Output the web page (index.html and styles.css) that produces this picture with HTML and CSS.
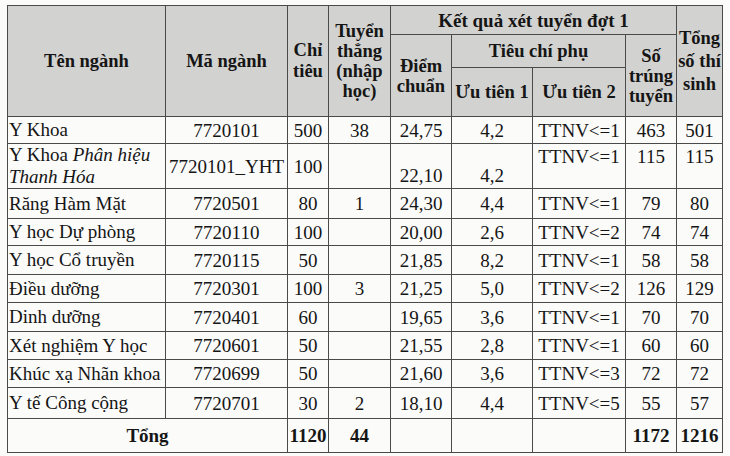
FILE: index.html
```html
<!DOCTYPE html>
<html lang="vi">
<head>
<meta charset="utf-8">
<title>Kết quả xét tuyển đợt 1</title>
<link rel="stylesheet" href="styles.css">
</head>
<body>
<table class="results">
  <colgroup>
    <col class="c-name"><col class="c-code"><col class="c-quota"><col class="c-direct">
    <col class="c-score"><col class="c-p1"><col class="c-p2"><col class="c-admit"><col class="c-total">
  </colgroup>
  <thead>
    <tr class="h1">
      <th rowspan="3">Tên ngành</th>
      <th rowspan="3">Mã ngành</th>
      <th rowspan="3">Chỉ<br>tiêu</th>
      <th rowspan="3" class="tight">Tuyển<br>thẳng<br>(nhập<br>học)</th>
      <th colspan="4" class="big">Kết quả xét tuyển đợt 1</th>
      <th rowspan="3" class="loose">Tổng<br>số thí<br>sinh</th>
    </tr>
    <tr class="h2">
      <th rowspan="2" class="tight">Điểm<br>chuẩn</th>
      <th colspan="2">Tiêu chí phụ</th>
      <th rowspan="2" class="tight">Số<br>trúng<br>tuyển</th>
    </tr>
    <tr class="h3">
      <th>Ưu tiên 1</th>
      <th>Ưu tiên 2</th>
    </tr>
  </thead>
  <tbody>
    <tr class="r27"><td class="name">Y Khoa</td><td>7720101</td><td>500</td><td>38</td><td>24,75</td><td>4,2</td><td>TTNV&lt;=1</td><td>463</td><td>501</td></tr>
    <tr class="r45"><td class="name">Y Khoa <i>Phân hiệu<br>Thanh Hóa</i></td><td>7720101_YHT</td><td>100</td><td></td><td class="bot">22,10</td><td class="bot">4,2</td><td class="top">TTNV&lt;=1</td><td class="top">115</td><td class="top">115</td></tr>
    <tr class="r30"><td class="name">Răng Hàm Mặt</td><td>7720501</td><td>80</td><td>1</td><td>24,30</td><td>4,4</td><td>TTNV&lt;=1</td><td>79</td><td>80</td></tr>
    <tr class="r27"><td class="name">Y học Dự phòng</td><td>7720110</td><td>100</td><td></td><td>20,00</td><td>2,6</td><td>TTNV&lt;=2</td><td>74</td><td>74</td></tr>
    <tr class="r29"><td class="name">Y học Cổ truyền</td><td>7720115</td><td>50</td><td></td><td>21,85</td><td>8,2</td><td>TTNV&lt;=1</td><td>58</td><td>58</td></tr>
    <tr class="r28"><td class="name">Điều dưỡng</td><td>7720301</td><td>100</td><td>3</td><td>21,25</td><td>5,0</td><td>TTNV&lt;=2</td><td>126</td><td>129</td></tr>
    <tr class="r29"><td class="name">Dinh dưỡng</td><td>7720401</td><td>60</td><td></td><td>19,65</td><td>3,6</td><td>TTNV&lt;=1</td><td>70</td><td>70</td></tr>
    <tr class="r28"><td class="name">Xét nghiệm Y học</td><td>7720601</td><td>50</td><td></td><td>21,55</td><td>2,8</td><td>TTNV&lt;=1</td><td>60</td><td>60</td></tr>
    <tr class="r28"><td class="name">Khúc xạ Nhãn khoa</td><td>7720699</td><td>50</td><td></td><td>21,60</td><td>3,6</td><td>TTNV&lt;=3</td><td>72</td><td>72</td></tr>
    <tr class="r31"><td class="name">Y tế Công cộng</td><td>7720701</td><td>30</td><td>2</td><td>18,10</td><td>4,4</td><td>TTNV&lt;=5</td><td>55</td><td>57</td></tr>
    <tr class="r34 sum"><td colspan="2">Tổng</td><td>1120</td><td>44</td><td></td><td></td><td></td><td>1172</td><td>1216</td></tr>
  </tbody>
</table>
</body>
</html>
```

FILE: styles.css
```css
html, body {
  margin: 0;
  padding: 0;
  background: #fbfbfa;
}
body {
  font-family: "Liberation Serif", "Tinos", "Times New Roman", "DejaVu Serif", serif;
  color: #151515;
  font-size: 19px;
}
.results {
  margin: 5px 0 0 7px;
  border-collapse: collapse;
  table-layout: fixed;
  width: 716px;
  font-family: "Liberation Serif", "Tinos", "Times New Roman", "DejaVu Serif", serif;
}
.results th,
.results td {
  border: 1px solid #4a4a4a;
  padding: 0 1px;
  text-align: center;
  vertical-align: middle;
  line-height: 21px;
  white-space: nowrap;
  overflow: hidden;
}
.results td { font-size: 19px; }
.results th {
  background: #d2d2d0;
  font-weight: bold;
  font-size: 18.5px;
}
.results th.big { font-size: 19px; }
.results th.tight { line-height: 20px; }
.results th.loose { line-height: 23px; }
.c-name { width: 158px; }
.c-code { width: 122px; }
.c-quota { width: 41px; }
.c-direct { width: 62px; }
.c-score { width: 61px; }
.c-p1 { width: 81px; }
.c-p2 { width: 93px; }
.c-admit { width: 51px; }
.c-total { width: 46px; }
.h1 { height: 29px; }
.h2 { height: 33px; }
.h3 { height: 49px; }
.results td.name {
  text-align: left;
  padding-left: 1px;
  line-height: 22px;
}
.results td.top { vertical-align: top; padding-top: 2px; }
.results td.bot { vertical-align: bottom; padding-bottom: 2px; }
.r27 { height: 27px; }
.r28 { height: 28px; }
.r29 { height: 29px; }
.r30 { height: 30px; }
.r31 { height: 31px; }
.r34 { height: 34px; }
.r45 { height: 45px; }
.sum td { font-weight: bold; }
```
